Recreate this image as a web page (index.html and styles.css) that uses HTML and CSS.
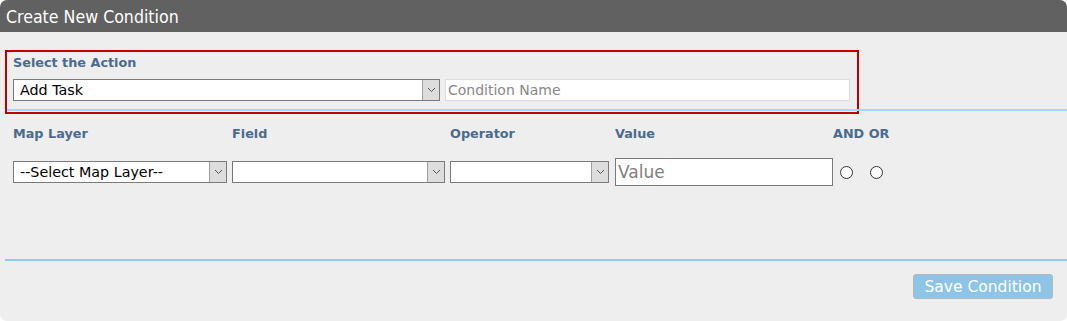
FILE: index.html
```html
<!DOCTYPE html>
<html lang="en">
<head>
    <meta charset="UTF-8">
    <title>Create New Condition</title>
    <link rel="stylesheet" href="styles.css">
</head>
<body>
    <div class="panel">
        <div class="panel-header">Create New Condition</div>

        <div class="action-box">
            <div class="field-label">Select the Action</div>
            <div class="action-row">
                <div class="select-box action-select">
                    <select><option>Add Task</option></select>
                    <span class="arrow"><svg width="9" height="6" viewBox="0 0 9 6"><path d="M1 1l3.5 3.5L8 1" fill="none" stroke="#555" stroke-width="1"/></svg></span>
                </div>
                <input class="name-input" type="text" placeholder="Condition Name">
            </div>
        </div>
        <div class="divider top-divider"></div>

        <div class="condition-grid">
            <div class="field-label">Map Layer</div>
            <div class="field-label">Field</div>
            <div class="field-label">Operator</div>
            <div class="field-label">Value</div>
            <div class="field-label">AND OR</div>

            <div class="select-box layer-select">
                <select><option>--Select Map Layer--</option></select>
                <span class="arrow"><svg width="9" height="6" viewBox="0 0 9 6"><path d="M1 1l3.5 3.5L8 1" fill="none" stroke="#555" stroke-width="1"/></svg></span>
            </div>
            <div class="select-box field-select">
                <select><option></option></select>
                <span class="arrow"><svg width="9" height="6" viewBox="0 0 9 6"><path d="M1 1l3.5 3.5L8 1" fill="none" stroke="#555" stroke-width="1"/></svg></span>
            </div>
            <div class="select-box operator-select">
                <select><option></option></select>
                <span class="arrow"><svg width="9" height="6" viewBox="0 0 9 6"><path d="M1 1l3.5 3.5L8 1" fill="none" stroke="#555" stroke-width="1"/></svg></span>
            </div>
            <input class="value-input" type="text" placeholder="Value">
            <div class="radios">
                <span class="radio"></span>
                <span class="radio"></span>
            </div>
        </div>

        <div class="divider bottom-divider"></div>

        <div class="actions">
            <button class="save-btn" type="button">Save Condition</button>
        </div>
    </div>
</body>
</html>
```

FILE: styles.css
```css
* {
    margin: 0;
    padding: 0;
    box-sizing: border-box;
    font-family: 'DejaVu Sans', Verdana, sans-serif;
}

body {
    background-color: #ffffff;
}

.panel {
    width: 1067px;
    height: 321px;
    background-color: #eeeeee;
    border-radius: 7px;
    overflow: hidden;
}

.panel-header {
    height: 32px;
    background-color: #616161;
    color: #ffffff;
    font-size: 17.6px;
    font-stretch: condensed;
    line-height: 34px;
    padding-left: 6px;
}

.action-box {
    width: 854px;
    height: 64px;
    margin: 18px 0 0 5px;
    border: 2px solid #c00000;
    padding: 3px 0 0 6px;
}

.field-label {
    font-size: 12.8px;
    font-weight: bold;
    color: #4a6b8d;
    line-height: 16px;
}

.action-row {
    display: flex;
    gap: 5px;
    margin-top: 8px;
}

.select-box {
    display: flex;
    height: 22px;
    border: 1px solid #7a7a7a;
    background-color: #ffffff;
}

.select-box select {
    flex: 1;
    min-width: 0;
    border: none;
    outline: none;
    background: transparent;
    appearance: none;
    -webkit-appearance: none;
    font-size: 14.3px;
    color: #000000;
    padding-left: 6px;
}

.select-box .arrow {
    width: 17px;
    display: flex;
    align-items: center;
    justify-content: center;
    background-color: #dddddd;
    border-left: 1px solid #a0a0a0;
}

.action-select {
    width: 427px;
}

.name-input {
    width: 405px;
    height: 22px;
    border: 1px solid #dddddd;
    background-color: #ffffff;
    font-size: 14px;
    padding-left: 2px;
    outline: none;
}

.name-input::placeholder {
    color: #888888;
}

.divider {
    height: 2px;
    background-color: #a8d5f5;
    margin-left: 5px;
}

.top-divider {
    margin-top: -5px;
    margin-left: 7px;
}

.condition-grid {
    display: grid;
    grid-template-columns: 219px 218px 165px 218px auto;
    row-gap: 16px;
    align-items: center;
    padding: 15px 0 0 13px;
}

.layer-select {
    width: 214px;
}

.field-select {
    width: 213px;
}

.operator-select {
    width: 159px;
}

.value-input {
    width: 218px;
    height: 28px;
    border: 1px solid #7a7a7a;
    background-color: #ffffff;
    font-size: 17px;
    padding-left: 2px;
    outline: none;
}

.value-input::placeholder {
    color: #808080;
}

.radios {
    display: flex;
    gap: 17px;
    padding-left: 7px;
}

.radio {
    width: 13px;
    height: 13px;
    border: 1px solid #333333;
    border-radius: 50%;
    background-color: #ffffff;
}

.bottom-divider {
    margin-top: 73px;
    background-color: #8fcaf2;
}

.actions {
    display: flex;
    justify-content: flex-end;
    padding: 13px 14px 0 0;
}

.save-btn {
    width: 140px;
    height: 25px;
    background-color: #8ec5e6;
    color: #ffffff;
    border: 1px solid #b0b8c0;
    border-radius: 3px;
    font-size: 15.5px;
    cursor: pointer;
}
```
